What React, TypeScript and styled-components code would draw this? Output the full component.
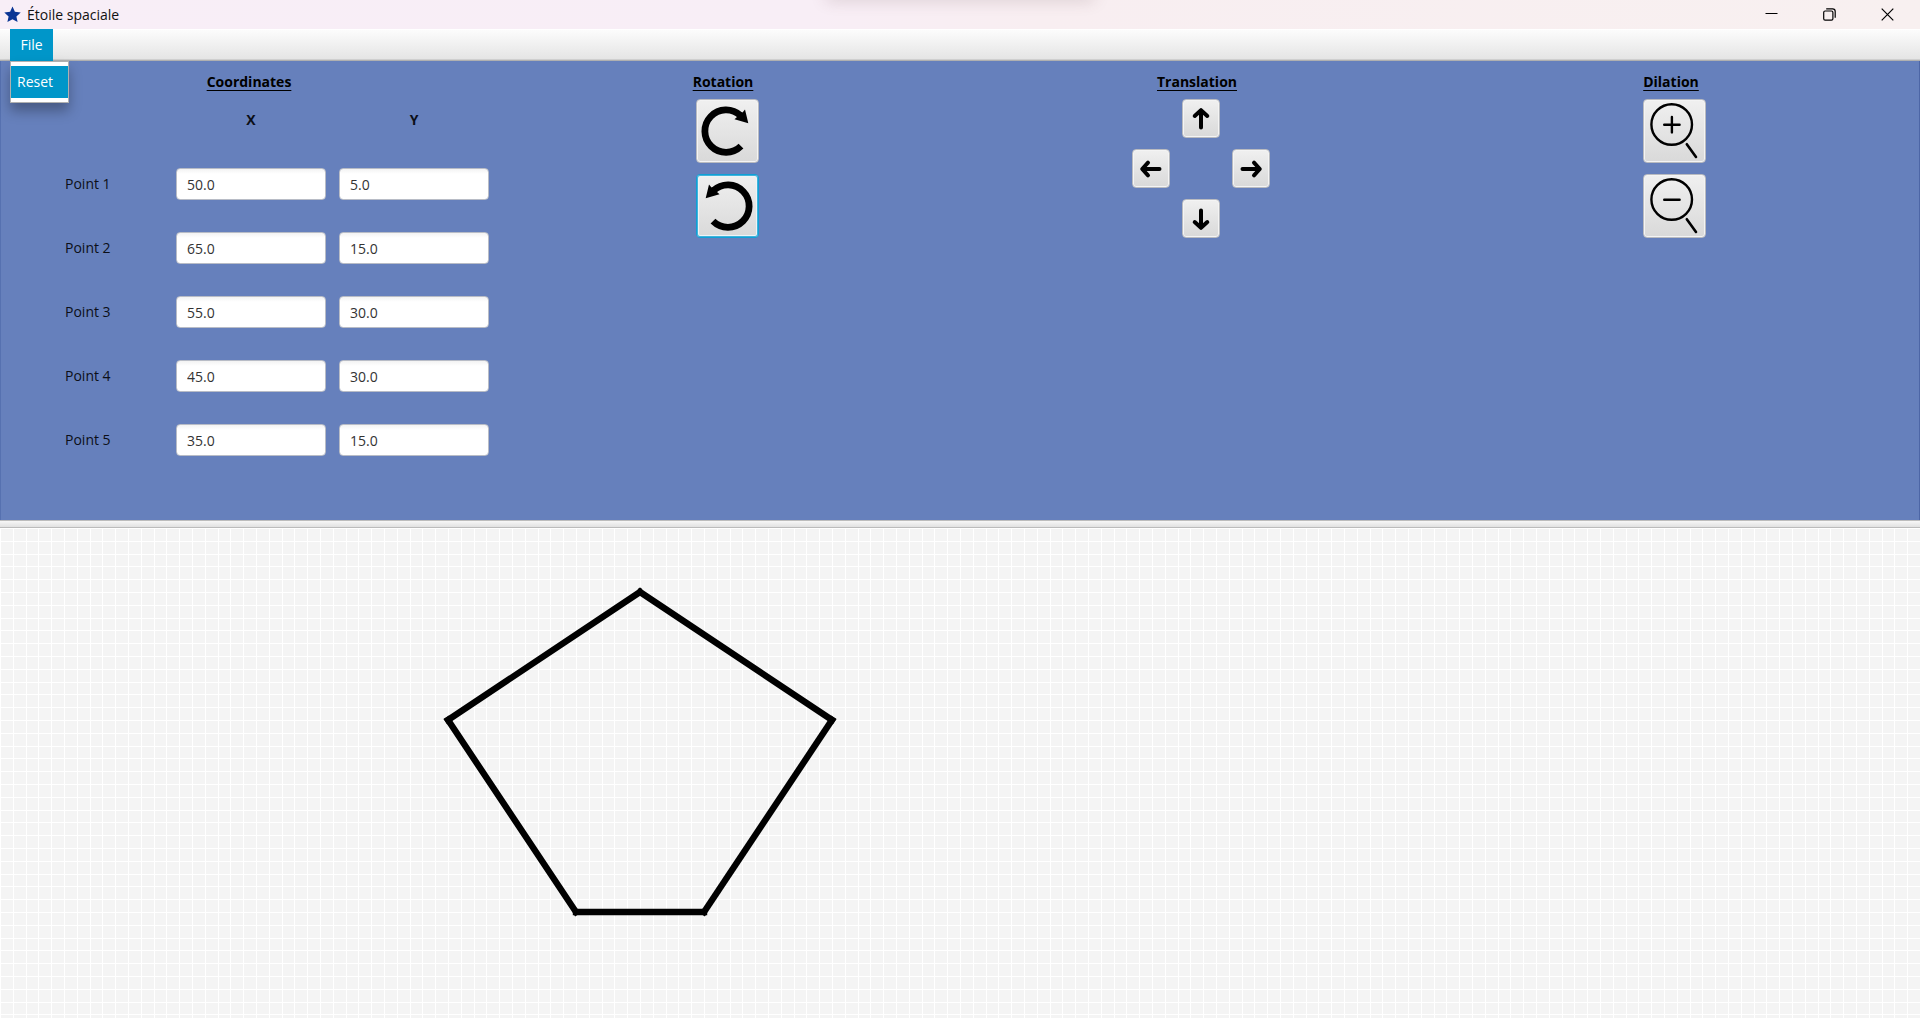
import React, { useState } from "react";
import styled, { createGlobalStyle } from "styled-components";

const GlobalStyle = createGlobalStyle`
  * { box-sizing: border-box; }
  body { margin: 0; background: #f4f4f4; }
  body, button, input {
    font-family: "Open Sans", "Noto Sans", sans-serif;
    font-size: 14px;
    line-height: 20px;
  }
`;

const Window = styled.div`
  display: flex;
  flex-direction: column;
  height: 100vh;
  overflow: hidden;
`;

const TitleBar = styled.header`
  position: relative;
  display: flex;
  align-items: center;
  height: 29px;
  flex: none;
  padding: 0 4px;
  overflow: hidden;
  background: linear-gradient(90deg, #f8eef7 0%, #f8eef6 42%, #f8eef1 54%, #f8f0f0 100%);
  color: #111;
`;

const TopShadow = styled.div`
  position: absolute;
  top: -12px;
  left: 43%;
  right: 43%;
  height: 10px;
  box-shadow: 0 2px 16px rgba(90, 60, 70, 0.22);
`;

const Title = styled.h1`
  flex: 1;
  margin: 0 0 0 6px;
  font-size: 14px;
  line-height: 20px;
  font-weight: 400;
`;

const WindowButton = styled.button`
  display: flex;
  align-items: center;
  justify-content: center;
  width: 58px;
  height: 28px;
  padding: 0;
  border: 0;
  background: none;
`;

const MenuBar = styled.nav`
  display: flex;
  flex: none;
  height: 32px;
  padding: 0 10px;
  background: linear-gradient(#fdfdfd, #e3e3e3);
  box-shadow: inset 0 1px #fff, inset 0 -1px #b0b0b0, inset 0 -2px #cfcfcf;
`;

const MenuHolder = styled.div`
  position: relative;
`;

const MenuButton = styled.button`
  width: 43px;
  height: 32px;
  padding: 0;
  border: 0;
  background: #0096c9;
  color: #fff;
`;

const MenuPopup = styled.div`
  position: absolute;
  z-index: 2;
  top: 32px;
  left: 0;
  width: 59px;
  padding: 4px 0;
  background: #fff;
  border: 1px solid #b0b0b0;
  box-shadow: 0 8px 12px rgba(0, 0, 0, 0.3);
`;

const MenuItem = styled.button`
  display: block;
  width: 100%;
  height: 32px;
  padding: 0 0 0 6px;
  border: 0;
  background: #0096c9;
  color: #fff;
  text-align: left;
`;

const Controls = styled.main`
  display: grid;
  grid-template-columns: repeat(4, minmax(0, 1fr));
  flex: none;
  padding: 11px 12px 48px;
  background: #6680bc;
  box-shadow: inset 1px 0 #5671b0, inset -1px 0 #4d66a6;
`;

const Section = styled.section`
  display: flex;
  flex-direction: column;
  align-items: center;
`;

const Heading = styled.h2`
  margin: 0;
  font-size: 14px;
  line-height: 20px;
  font-weight: 700;
  color: #000;
  text-decoration: underline;
  text-decoration-thickness: 1px;
  text-underline-offset: 3px;
`;

const PointTable = styled.table`
  align-self: flex-start;
  flex: none;
  width: 424px;
  table-layout: fixed;
  margin: -4px 0 0 53px;
  border-spacing: 0;
  color: #0c0f18;

  tr { height: 64px; }
  th, td { padding: 0; }
  th:nth-child(2) { width: 150px; }
  th:nth-child(3) { width: 163px; }
  td:nth-child(3), th:nth-child(3) { padding-left: 13px; }
  th[scope="row"] { font-weight: 400; text-align: left; }
`;

const Field = styled.input`
  display: block;
  width: 150px;
  height: 32px;
  padding: 0 10px;
  border: 1px solid #b8bcc6;
  border-radius: 4px;
  outline: 0;
  background: linear-gradient(#f3f3f3, #fff 5px);
  color: #333;
`;

const ButtonStack = styled.div<{ $indent: number }>`
  display: grid;
  gap: 11px;
  padding: 7px 0 0 ${(p) => p.$indent}px;
`;

const ArrowPad = styled.div`
  display: grid;
  grid-template-columns: repeat(3, 38px);
  grid-template-areas: ". up ." "left . right" ". down .";
  gap: 11px 12px;
  padding: 7px 0 0 8px;
`;

const IconButton = styled.button<{ $size: "small" | "large"; $area?: string; $focused?: boolean }>`
  width: ${(p) => (p.$size === "large" ? 63 : 38)}px;
  height: ${(p) => (p.$size === "large" ? 64 : 39)}px;
  grid-area: ${(p) => p.$area ?? "auto"};
  padding: 0;
  border: 1px solid ${(p) => (p.$focused ? "#0fa0d6" : "#b9bbc0")};
  border-radius: 4px;
  background: linear-gradient(#f0f0f0, #d9d9d9);
  box-shadow: ${(p) =>
    p.$focused
      ? "inset 0 0 0 1px #3fb3dc, inset 0 0 0 2px #eef4f6"
      : "inset 0 0 0 1px #f4f4f4"};
  outline: 0;

  svg { display: block; margin: -1px; }
`;

const Divider = styled.div`
  flex: none;
  height: 8px;
  background: linear-gradient(#fbfbfb, #dedede);
  box-shadow: inset 0 1px #bdbdbd, inset 0 -1px #bcbcbc;
`;

const Plane = styled.div`
  flex: 1;
  min-height: 0;
  overflow: hidden;
  background: #f4f4f4;

  svg { display: block; width: 100%; height: 100%; }
`;

const UNIT = 12.8;
const initialPoints: [number, number][] = [
  [50, 5],
  [65, 15],
  [55, 30],
  [45, 30],
  [35, 15],
];

function RotateIcon({ reverse = false }: { reverse?: boolean }) {
  return (
    <svg width="63" height="63" viewBox="0 0 63 63" aria-hidden="true">
      <g transform={reverse ? "translate(62 0) scale(-1 1)" : undefined}>
        <path d="M45 46.2A21.2 21.2 0 1 1 44.5 15.6" fill="none" stroke="#000" strokeWidth="6.8" />
        <path d="M49 9.5L52.3 23.2L38.5 19.3L41 17L43.7 12.3L46.5 12.5Z" fill="#000" />
      </g>
    </svg>
  );
}

function MagnifierIcon({ plus = false }: { plus?: boolean }) {
  return (
    <svg width="63" height="63" viewBox="0 0 63 63" aria-hidden="true" fill="none" stroke="#000" strokeLinecap="round">
      <circle cx="28.7" cy="24.5" r="20.3" strokeWidth="2.4" />
      <path d={plus ? "M21.2 24.7H36.6M28.9 17V32.4" : "M21.2 24.7H36.6"} strokeWidth="2.4" />
      <path d="M43.8 44.2L53 57" strokeWidth="2.6" />
    </svg>
  );
}

function ArrowIcon({ angle }: { angle: number }) {
  return (
    <svg width="38" height="38" viewBox="0 0 38 38" aria-hidden="true">
      <path
        d="M19 27.5V11M12.7 16L19 10.2L25.3 16"
        transform={`rotate(${angle} 19 19)`}
        fill="none"
        stroke="#000"
        strokeWidth="4"
        strokeLinecap="round"
        strokeLinejoin="round"
      />
    </svg>
  );
}

function Grid() {
  const lines = Array.from({ length: 320 }, (_, i) => Math.floor(i * UNIT + 0.5) + 0.5);
  return (
    <g stroke="#fff" strokeWidth="1" shapeRendering="crispEdges">
      {lines.map((v) => (
        <path key={v} d={`M${v} 0V4096M0 ${v}H4096`} />
      ))}
    </g>
  );
}

export default function App() {
  const [points, setPoints] = useState(initialPoints);

  const update = (row: number, axis: number, value: string) =>
    setPoints(points.map((p, i) => (i === row ? (p.map((v, a) => (a === axis ? Number(value) || 0 : v)) as [number, number]) : p)));

  return (
    <Window>
      <GlobalStyle />
      <TitleBar>
        <TopShadow />
        <svg width="17" height="17" viewBox="0 0 17 17" aria-hidden="true">
          <path d="M8.5 0.6L10.9 5.8L16.7 6.5L12.4 10.4L13.6 16L8.5 13.2L3.4 16L4.6 10.4L0.3 6.5L6.1 5.8Z" fill="#0a3594" />
        </svg>
        <Title>Étoile spaciale</Title>
        <WindowButton aria-label="Minimize">
          <svg width="13" height="13" viewBox="0 0 13 13"><path d="M0.5 5.5H12.5" stroke="#000" /></svg>
        </WindowButton>
        <WindowButton aria-label="Restore">
          <svg width="13" height="13" viewBox="0 0 13 13" fill="none" stroke="#000" strokeWidth="1.2">
            <rect x="0.7" y="3" width="9.2" height="9.2" rx="1.4" />
            <path d="M3.2 0.8H9.6Q12.2 0.8 12.2 3.4V9.8" />
          </svg>
        </WindowButton>
        <WindowButton aria-label="Close">
          <svg width="13" height="13" viewBox="0 0 13 13"><path d="M0.7 0.7L12.3 12.3M12.3 0.7L0.7 12.3" stroke="#000" strokeWidth="1.2" /></svg>
        </WindowButton>
      </TitleBar>

      <MenuBar>
        <MenuHolder>
          <MenuButton aria-haspopup="menu" aria-expanded="true">File</MenuButton>
          <MenuPopup role="menu">
            <MenuItem role="menuitem" onClick={() => setPoints(initialPoints)}>Reset</MenuItem>
          </MenuPopup>
        </MenuHolder>
      </MenuBar>

      <Controls>
        <Section>
          <Heading>Coordinates</Heading>
          <PointTable>
            <thead>
              <tr>
                <td />
                <th scope="col">X</th>
                <th scope="col">Y</th>
              </tr>
            </thead>
            <tbody>
              {points.map((p, row) => (
                <tr key={row}>
                  <th scope="row">Point {row + 1}</th>
                  {p.map((v, axis) => (
                    <td key={axis}>
                      <Field
                        aria-label={`Point ${row + 1} ${axis === 0 ? "X" : "Y"}`}
                        value={v.toFixed(1)}
                        onChange={(e) => update(row, axis, e.target.value)}
                      />
                    </td>
                  ))}
                </tr>
              ))}
            </tbody>
          </PointTable>
        </Section>

        <Section>
          <Heading>Rotation</Heading>
          <ButtonStack $indent={8}>
            <IconButton $size="large" aria-label="Rotate clockwise"><RotateIcon /></IconButton>
            <IconButton $size="large" $focused aria-label="Rotate counterclockwise"><RotateIcon reverse /></IconButton>
          </ButtonStack>
        </Section>

        <Section>
          <Heading>Translation</Heading>
          <ArrowPad>
            <IconButton $size="small" $area="up" aria-label="Move up"><ArrowIcon angle={0} /></IconButton>
            <IconButton $size="small" $area="left" aria-label="Move left"><ArrowIcon angle={-90} /></IconButton>
            <IconButton $size="small" $area="right" aria-label="Move right"><ArrowIcon angle={90} /></IconButton>
            <IconButton $size="small" $area="down" aria-label="Move down"><ArrowIcon angle={180} /></IconButton>
          </ArrowPad>
        </Section>

        <Section>
          <Heading>Dilation</Heading>
          <ButtonStack $indent={6}>
            <IconButton $size="large" aria-label="Zoom in"><MagnifierIcon plus /></IconButton>
            <IconButton $size="large" aria-label="Zoom out"><MagnifierIcon /></IconButton>
          </ButtonStack>
        </Section>
      </Controls>

      <Divider />

      <Plane>
        <svg role="img" aria-label="Polygon">
          <Grid />
          <g stroke="#000" strokeWidth="6.4" strokeLinecap="square">
            {points.map(([x, y], i) => {
              const [nx, ny] = points[(i + 1) % points.length];
              return <line key={i} x1={x * UNIT} y1={y * UNIT} x2={nx * UNIT} y2={ny * UNIT} />;
            })}
          </g>
        </svg>
      </Plane>
    </Window>
  );
}
